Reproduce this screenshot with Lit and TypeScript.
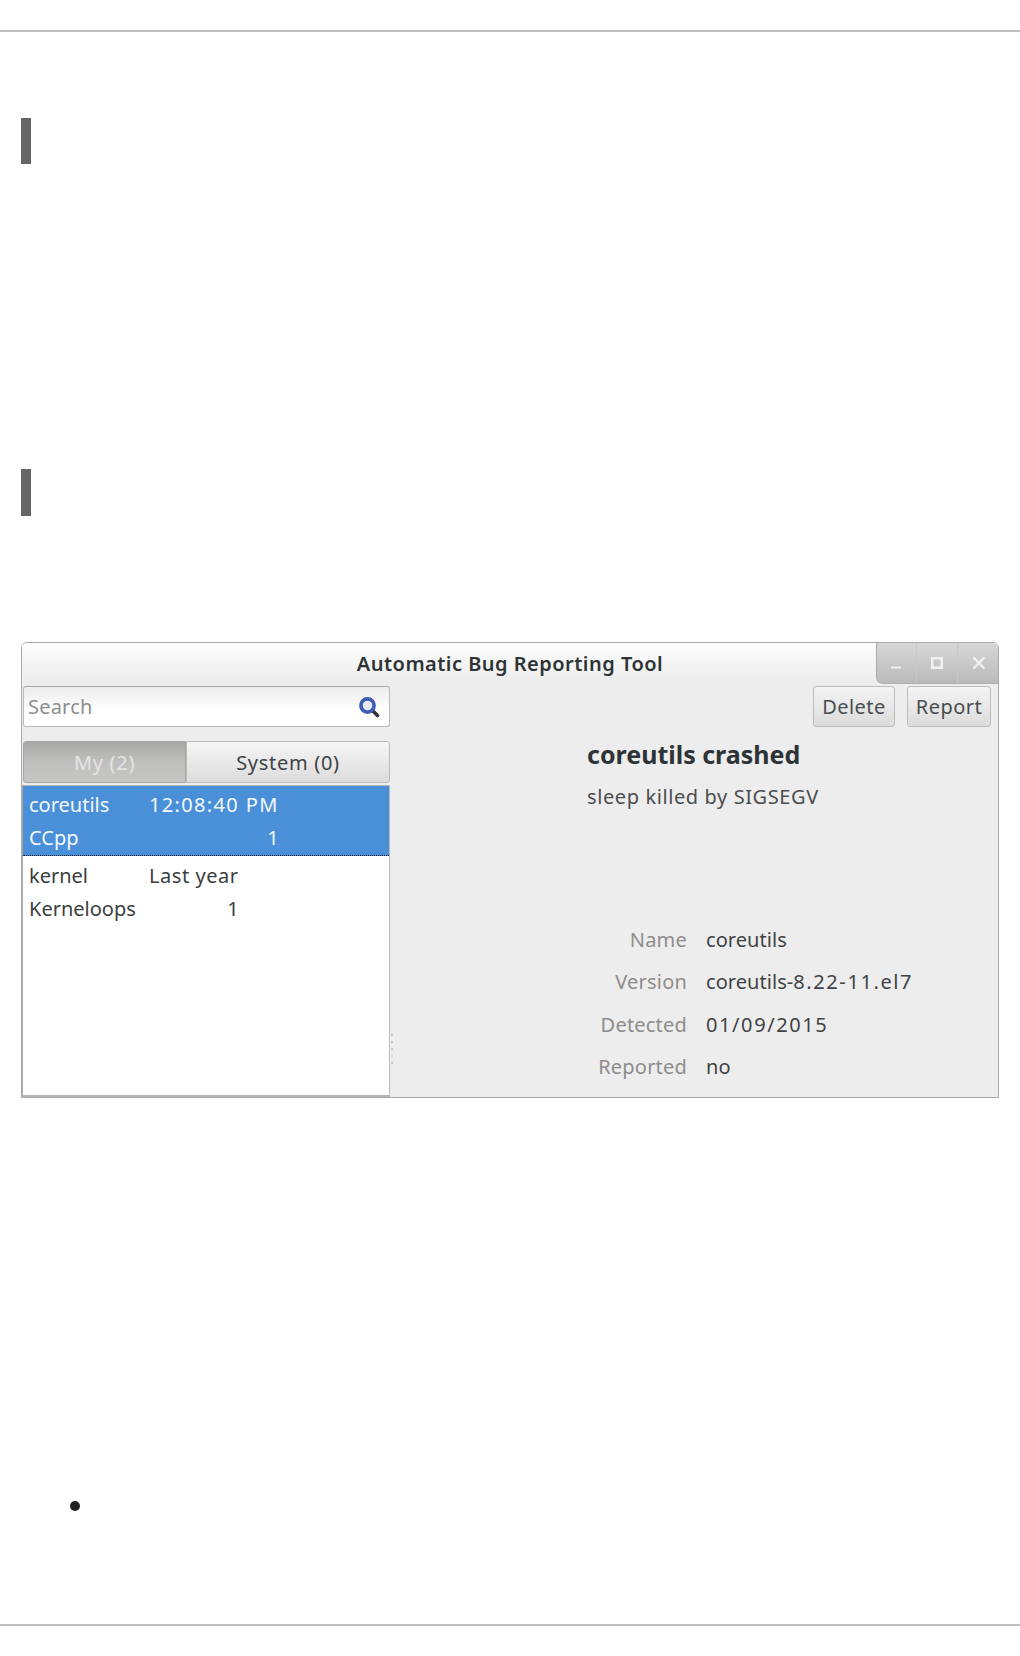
import { LitElement, html, css } from "lit";
import { customElement } from "lit/decorators.js";

@customElement("app-root")
export class AppRoot extends LitElement {
  static styles = css`
    :host { display: block; width: 1020px; height: 1656px; background: #fff; overflow: hidden;
      font-family: "Noto Sans", "Open Sans", sans-serif; font-size: 20px; color: #3a3e40; }
    .rule { height: 2px; background: #bdbdbd; }
    .top { margin-top: 30px; }
    .bar { width: 10px; height: 46px; margin-left: 21px; background: #666; }
    .bar1 { margin-top: 86px; }
    .bar2 { margin-top: 305px; height: 47px; }
    .win { margin: 126px 0 0 21px; width: 978px; height: 456px; box-sizing: border-box;
      border: 1px solid #a9a9a9; border-radius: 6px 6px 0 0; background: #ededed; overflow: hidden; }
    .titlebar { height: 38px; display: grid; grid-template-columns: 1fr auto 1fr; align-items: stretch;
      background: linear-gradient(#fdfdfd, #ededed); }
    .title { font-weight: 600; font-size: 20px; color: #2e3436; line-height: 41px; letter-spacing: .48px; }
    .wbtns { justify-self: end; width: 122px; display: grid; grid-template-columns: 40px 41px 41px;
      background: linear-gradient(#d6d7d6, #b9bab9); border-left: 1px solid #aaa; border-bottom: 1px solid #b0b0b0; border-radius: 0 0 0 7px; box-sizing: border-box; }
    .wbtn { display: flex; align-items: center; justify-content: center; border-right: 1px solid #c8c8c8; }
    .wbtn:last-child { border-right: 0; }
    .wbtn svg { width: 16px; height: 16px; display: block; }
    .body { display: grid; grid-template-columns: 367px 1fr; height: 416px; padding-left: 1px; }
    .left { display: flex; flex-direction: column; padding-top: 5px; }
    .search { height: 41px; box-sizing: border-box; border: 1px solid #b9b9b9; border-top-color: #a8a8a8; border-radius: 3px;
      background: linear-gradient(#ececec, #fff 60%); display: flex; align-items: center; justify-content: space-between; padding: 0 9px 0 4px; color: #8d8f8f; letter-spacing: .2px; }
    .search svg { width: 22px; height: 22px; display: block; }
    .tabs { display: grid; grid-template-columns: 163px 1fr; margin-top: 14px; height: 42px; }
    .tab { display: flex; align-items: center; justify-content: center; box-sizing: border-box; border: 1px solid #bbb; letter-spacing: .7px; }
    .tab.on { background: linear-gradient(#a9aaa8, #bfc0be 50%, #c6c7c5); color: #e4e4e4; border-color: #a5a5a5; border-radius: 3px 0 0 3px; }
    .tab.off { background: linear-gradient(#f6f6f6, #dcdcdc); color: #3f4345; border-radius: 0 3px 3px 0; }
    .list { flex: 1; margin-top: 2px; background: #fff; border-top: 1px solid #b5b5b5; border-right: 1px solid #bbb; border-bottom: 2px solid #b5b5b5; border-left: 1px solid #a9a9a9; margin-left: -1px; }
    .row { display: grid; grid-template-columns: 120px auto; justify-content: start; padding: 3px 0 0 6px; height: 69px; box-sizing: border-box; line-height: 31px; }
    .row span:nth-child(4) { text-align: right; }
    .row .time { letter-spacing: 1.35px; }
    .row .ago { letter-spacing: .55px; }
    .row.sel { background: #4a90d9; color: #f4f8fc; border-bottom: 1px dotted #222; height: 70px; }
    .row.norm { padding-top: 4px; }
    .right { position: relative; display: flex; flex-direction: column; padding-top: 5px; }
    .actions { display: flex; justify-content: flex-end; gap: 12px; padding-right: 7px; }
    .btn { height: 41px; box-sizing: border-box; border: 1px solid #bdbdbd; border-radius: 3px; background: linear-gradient(#f4f4f4, #dcdcdc); display: flex; align-items: center; justify-content: center; letter-spacing: .45px; color: #4a4d4f; }
    .btn.d { width: 82px; } .btn.r { width: 84px; }
    .detail { padding-left: 197px; }
    .heading { margin-top: 10px; font-weight: 700; font-size: 25px; line-height: 34px; color: #2e3436; }
    .sub { margin-top: 12px; line-height: 28px; letter-spacing: .6px; color: #4a4d4f; }
    .meta { margin: 115px 0 0 0; display: grid; grid-template-columns: 100px auto; column-gap: 19px; justify-content: start; row-gap: 14.3px; line-height: 28px; }
    .k { text-align: right; color: #8f8c8c; letter-spacing: .2px; }
    .v { color: #3f4345; letter-spacing: .05px; white-space: nowrap; }
    .num { letter-spacing: 1.6px; }
    .grip { position: absolute; left: 1px; bottom: 33px; display: flex; flex-direction: column; gap: 5px; }
    .grip i { width: 2px; height: 2px; background: #c9c9c9; display: block; }
    .dot { width: 10px; height: 10px; border-radius: 50%; background: #222; margin: 403px 0 0 70px; }
    .bottom { margin-top: 113px; }
  `;

  render() {
    return html`
      <div class="rule top"></div>
      <div class="bar bar1"></div>
      <div class="bar bar2"></div>
      <div class="win">
        <div class="titlebar">
          <div></div>
          <div class="title">Automatic Bug Reporting Tool</div>
          <div class="wbtns">
            <div class="wbtn"><svg viewBox="0 0 16 16"><rect x="2" y="11.5" width="10" height="2" fill="#f2f2f2"/></svg></div>
            <div class="wbtn"><svg viewBox="0 0 16 16"><path d="M2 2h12v12H2z M4.5 4.5v7h7v-7z" fill="#f2f2f2" fill-rule="evenodd"/></svg></div>
            <div class="wbtn"><svg viewBox="0 0 16 16"><path d="M2.5 2.5l11 11M13.5 2.5l-11 11" stroke="#f2f2f2" stroke-width="2.4" fill="none"/></svg></div>
          </div>
        </div>
        <div class="body">
          <div class="left">
            <div class="search">
              <span>Search</span>
              <svg viewBox="0 0 22 22">
                <path d="M15 15l4.5 4.5" stroke="#333" stroke-width="3.6" stroke-linecap="round"/>
                <circle cx="9.5" cy="9.5" r="6.6" fill="#e6ebf4" stroke="#3d5cb5" stroke-width="3.6"/>
              </svg>
            </div>
            <div class="tabs">
              <div class="tab on">My (2)</div>
              <div class="tab off">System (0)</div>
            </div>
            <div class="list">
              <div class="row sel"><span>coreutils</span><span class="time">12:08:40 PM</span><span>CCpp</span><span>1</span></div>
              <div class="row norm"><span>kernel</span><span class="ago">Last year</span><span>Kerneloops</span><span>1</span></div>
            </div>
          </div>
          <div class="right">
            <div class="grip"><i></i><i></i><i></i><i></i><i></i></div>
            <div class="actions">
              <div class="btn d">Delete</div>
              <div class="btn r">Report</div>
            </div>
            <div class="detail">
              <div class="heading">coreutils crashed</div>
              <div class="sub">sleep killed by SIGSEGV</div>
              <div class="meta">
                <div class="k">Name</div><div class="v">coreutils</div>
                <div class="k">Version</div><div class="v">coreutils-<span class="num">8.22-11.el7</span></div>
                <div class="k">Detected</div><div class="v"><span class="num">01/09/2015</span></div>
                <div class="k">Reported</div><div class="v">no</div>
              </div>
            </div>
          </div>
        </div>
      </div>
      <div class="dot"></div>
      <div class="rule bottom"></div>
    `;
  }
}
